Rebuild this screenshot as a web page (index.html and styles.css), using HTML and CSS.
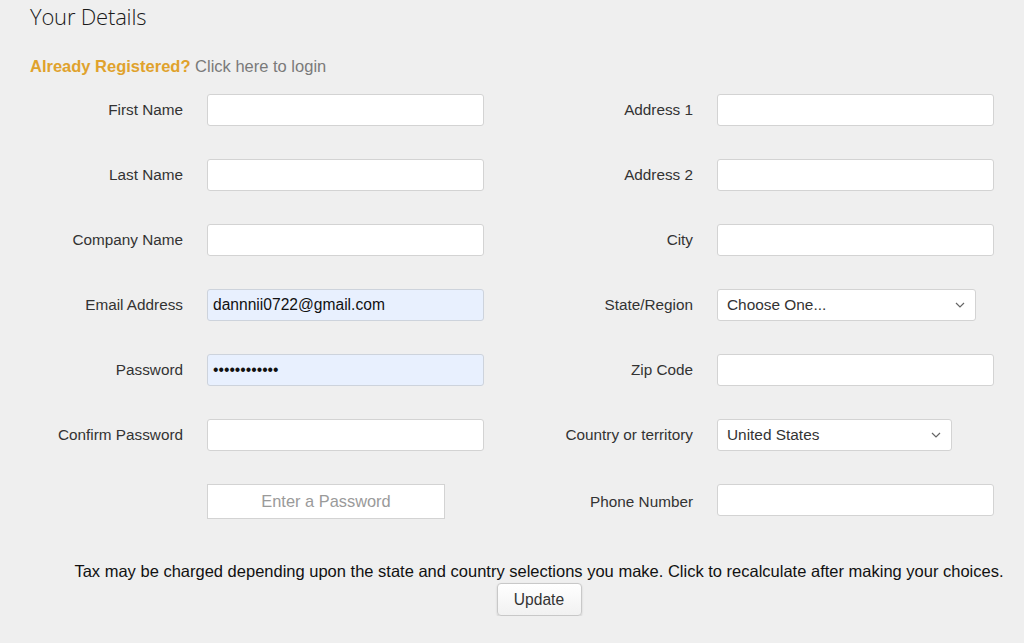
FILE: index.html
```html
<!DOCTYPE html>
<html lang="en">
<head>
<meta charset="utf-8">
<title>Your Details</title>
<link rel="stylesheet" href="styles.css">
</head>
<body>
<div class="page">
  <h1 class="title">Your Details</h1>
  <p class="login"><span class="login-q">Already Registered?</span> <a class="login-link" href="#">Click here to login</a></p>

  <form class="form">
    <label class="label">First Name</label>
    <input class="field" type="text">
    <label class="label">Address 1</label>
    <input class="field" type="text">

    <label class="label">Last Name</label>
    <input class="field" type="text">
    <label class="label">Address 2</label>
    <input class="field" type="text">

    <label class="label">Company Name</label>
    <input class="field" type="text">
    <label class="label">City</label>
    <input class="field" type="text">

    <label class="label">Email Address</label>
    <input class="field autofill" type="text" value="dannnii0722@gmail.com">
    <label class="label">State/Region</label>
    <div class="select select-state"><span>Choose One...</span><svg class="chev" viewBox="0 0 10 6" width="10" height="6"><path d="M1 1l4 4 4-4" fill="none" stroke="#666" stroke-width="1.2"/></svg></div>

    <label class="label">Password</label>
    <input class="field autofill" type="password" value="dannii072222">
    <label class="label">Zip Code</label>
    <input class="field" type="text">

    <label class="label">Confirm Password</label>
    <input class="field" type="password">
    <label class="label">Country or territory</label>
    <div class="select select-country"><span>United States</span><svg class="chev" viewBox="0 0 10 6" width="10" height="6"><path d="M1 1l4 4 4-4" fill="none" stroke="#666" stroke-width="1.2"/></svg></div>

    <span class="label"></span>
    <div class="pwbox">Enter a Password</div>
    <label class="label">Phone Number</label>
    <input class="field field-top" type="text">
  </form>

  <div class="tax">
    <p class="tax-text">Tax may be charged depending upon the state and country selections you make. Click to recalculate after making your choices.</p>
    <button class="update" type="button">Update</button>
  </div>
</div>
</body>
</html>
```

FILE: styles.css
```css
html, body {
  margin: 0;
  padding: 0;
  background: #efefef;
}

body {
  font-family: "Liberation Sans", Arial, sans-serif;
  color: #333;
}

.page {
  padding: 2px 0 0 30px;
}

.title {
  margin: 0;
  font-family: "Open Sans", "Liberation Sans", sans-serif;
  font-weight: 300;
  font-size: 22px;
  line-height: 28px;
  color: #1a1a1a;
  letter-spacing: -0.2px;
}

.login {
  margin: 26px 0 0;
  font-size: 16.5px;
  line-height: 20px;
}

.login-q {
  color: #e0a22c;
  font-weight: bold;
}

.login-link {
  color: #7a7a7a;
  text-decoration: none;
}

.form {
  display: grid;
  grid-template-columns: 153px 277px 185px 277px;
  column-gap: 24px;
  row-gap: 33px;
  align-items: center;
  margin-top: 18px;
}

.label {
  text-align: right;
  font-size: 15.3px;
  color: #333;
  white-space: nowrap;
}

.field {
  box-sizing: border-box;
  width: 277px;
  height: 32px;
  margin: 0;
  padding: 0 5px;
  border: 1px solid #d3d3d3;
  border-radius: 3px;
  background: #fff;
  font-family: "Liberation Sans", Arial, sans-serif;
  font-size: 15.6px;
  color: #111;
  outline: none;
}

.field-top {
  align-self: start;
}

.autofill {
  background: #e8f0fe;
  border-color: #cdd3dc;
}

.select {
  box-sizing: border-box;
  height: 32px;
  display: flex;
  align-items: center;
  justify-content: space-between;
  padding: 0 10px 0 9px;
  border: 1px solid #d3d3d3;
  border-radius: 3px;
  background: #fff;
  font-size: 15.4px;
  color: #333;
}

.select-state {
  width: 259px;
}

.select-country {
  width: 235px;
}

.chev {
  display: block;
}

.pwbox {
  box-sizing: border-box;
  width: 238px;
  height: 35px;
  display: flex;
  align-items: center;
  justify-content: center;
  border: 1px solid #d3d3d3;
  background: #fff;
  font-size: 16.4px;
  color: #9a9a9a;
}

.tax {
  margin: 43px 0 0 24px;
  display: flex;
  flex-direction: column;
  align-items: center;
}

.tax-text {
  margin: 0;
  font-size: 16.5px;
  line-height: 19px;
  color: #111;
  white-space: nowrap;
}

.update {
  margin-top: 2px;
  box-sizing: border-box;
  width: 85px;
  height: 33px;
  border: 1px solid #c8c8c8;
  border-radius: 4px;
  background: linear-gradient(#ffffff, #f1f1f1);
  box-shadow: 0 1px 2px rgba(0,0,0,0.15);
  font-family: "Liberation Sans", Arial, sans-serif;
  font-size: 15.6px;
  color: #333;
  padding: 0;
}
```
